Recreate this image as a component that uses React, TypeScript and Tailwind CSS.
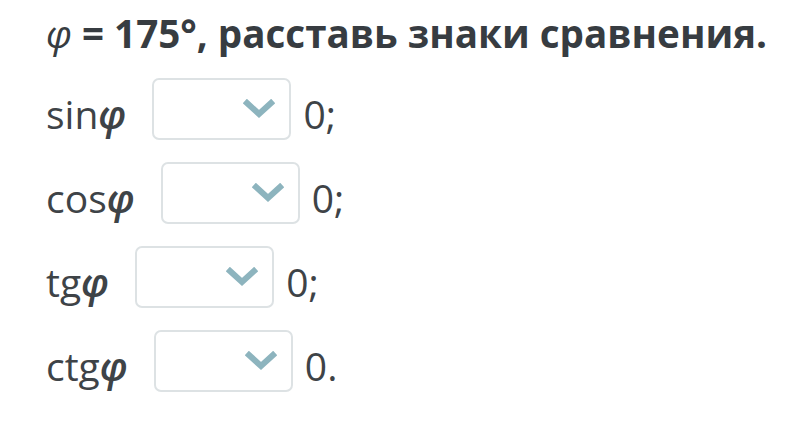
import React from 'react';

const Chevron: React.FC = () => (
  <svg width="32" height="20" viewBox="0 0 32 20" fill="none">
    <path d="M4 4 L16 15 L28 4" stroke="#8db4be" strokeWidth="6" strokeLinecap="square" strokeLinejoin="miter" />
  </svg>
);

const rows = [
  { fn: 'sin', end: '0;' },
  { fn: 'cos', end: '0;' },
  { fn: 'tg', end: '0;' },
  { fn: 'ctg', end: '0.' },
];

const App: React.FC = () => {
  return (
    <div
      className="w-[810px] h-[422px] bg-white text-[#3e4347] pl-[46px] pt-[8px]"
      style={{ fontFamily: '"Open Sans", "Noto Sans", sans-serif' }}
    >
      <h1 className="text-[38.6px] leading-[50px] font-bold text-[#373c41] whitespace-nowrap">
        <span className="italic font-normal">φ</span> = 175°, расставь знаки сравнения.
      </h1>
      <div className="flex flex-col mt-[20px] gap-[22px]">
        {rows.map((r) => (
          <div key={r.fn} className="flex items-center h-[62px]">
            <span className="text-[39px] leading-none mr-[26px] pt-[8px]">
              {r.fn}
              <span className="italic font-semibold">φ</span>
            </span>
            <div className="w-[139px] h-[62px] rounded-[7px] border-2 border-[#dde2e4] bg-white flex items-center justify-end pr-[14px]">
              <Chevron />
            </div>
            <span className="text-[39px] leading-none ml-[12px] pt-[8px]">{r.end}</span>
          </div>
        ))}
      </div>
    </div>
  );
};

export default App;
